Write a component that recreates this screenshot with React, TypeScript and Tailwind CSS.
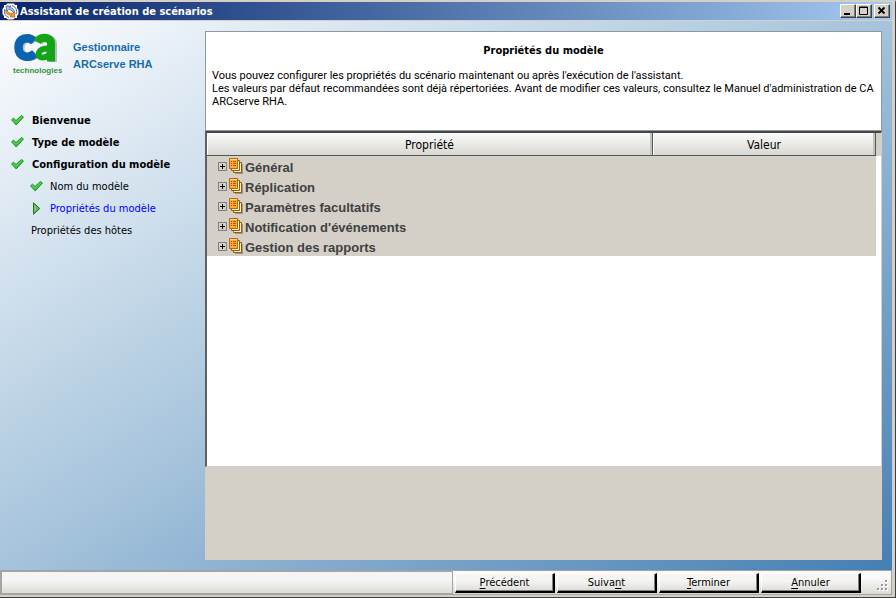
import React, { useState } from 'react';

type StepState = 'done' | 'current' | 'pending';

interface Step {
    label: string;
    state: StepState;
    sub?: boolean;
}

const steps: Step[] = [
    { label: 'Bienvenue', state: 'done' },
    { label: 'Type de modèle', state: 'done' },
    { label: 'Configuration du modèle', state: 'done' },
    { label: 'Nom du modèle', state: 'done', sub: true },
    { label: 'Propriétés du modèle', state: 'current', sub: true },
    { label: 'Propriétés des hôtes', state: 'pending', sub: true },
];

const groups = ['Général', 'Réplication', 'Paramètres facultatifs', "Notification d'événements", 'Gestion des rapports'];

const AppIcon = () => (
    <svg width="17" height="17" viewBox="0 0 17 17" className="shrink-0" aria-hidden="true">
        <path d="M5 .5h7l1 1.500h2V5l1.500 2v4L15 13v2h-2l-2 1.500H6L4 15H2v-2L.5 11V6L2 4V2h2z" fill="#fff" />
        <path d="M10 2.500a6 6 0 0 1 4 8.500M7 14.500A6 6 0 0 1 3 6" fill="none" stroke="#5a6a9c" strokeWidth="1" />
        <path d="M4 3h5l-1.500 1.500C11 5 12.500 7 12.500 9.500H11C10.500 8 9 6.500 6.500 6.500L5 8z" fill="#a9c2ee" stroke="#3a508c" strokeWidth=".7" />
        <path d="M13 14H8l1.500-1.500C6 12 3.500 10.500 3.500 7.500H5C6 9.500 8 10.500 10.500 10.500L12 9z" fill="#f2a02c" stroke="#a85c10" strokeWidth=".7" />
    </svg>
);

const CheckIcon = () => (
    <svg width="13" height="11" viewBox="0 0 13 11" className="shrink-0" aria-hidden="true">
        <path d="M.5 4.800 2.500 3.200 5 5.500 10.500.500l2 1.500-7.300 8z" fill="#2fc62f" stroke="#1d7a22" strokeWidth=".8" />
        <path d="M1.800 4.600 5 7.200 11 1.600" fill="none" stroke="#6be562" strokeWidth=".8" />
    </svg>
);

const ArrowIcon = () => (
    <svg width="13" height="13" viewBox="0 0 13 13" className="shrink-0" aria-hidden="true">
        <path d="M3.500.8v11.400L9.800 6.500z" fill="#5cb84e" stroke="#23731f" />
        <path d="M4.500 3.500v6L6 8V5z" fill="#8fd07c" />
    </svg>
);

const PagesIcon = () => (
    <svg width="14" height="16" viewBox="0 0 14 16" className="shrink-0" aria-hidden="true">
        <path d="M6 6h8v10H6z" fill="#9b9893" />
        <path d="M4.500 4.500h8v10h-8z" fill="#fff0cf" stroke="#9a5706" />
        <path d="M2.500 2.500h8v10h-8z" fill="#fff0cf" stroke="#9a5706" />
        <path d="M.5.5h8v10h-8z" fill="#fbaa3a" stroke="#b86708" />
        <path d="M1 1h7v1H1z" fill="#ffd48a" />
        <path d="M2 3.500h1M4 3.500h3M2 5.500h1M4 5.500h3M2 7.500h1M4 7.500h3" stroke="#a35c08" />
    </svg>
);

const CaLogo = () => (
    <svg width="50" height="44" viewBox="0 0 50 44" className="shrink-0" role="img" aria-label="ca technologies">
        <g transform="translate(1.5 .5)" fill="none" stroke="#8b9698" strokeOpacity=".6">
            <path d="M22 8C18 3.500 7 4 7 14.500s11 11 16 6" strokeWidth="8" />
            <path d="M25 9C28 3.500 39.500 3.500 39.500 10.500v18" strokeWidth="8" />
        </g>
        <path d="M22 8.500C17 3 6.500 4.500 6.500 14.500S17 26 23 20.500" fill="none" stroke="#0a62b0" strokeWidth="8.500" />
        <path d="M25 9C28 3 39 3 39 10.500v18" fill="none" stroke="#12a515" strokeWidth="8" />
        <path d="M38 15.500c-13-1-14 9-7.500 9 5 0 7.500-3 7.500-7" fill="none" stroke="#12a515" strokeWidth="6" />
        <text x="1" y="40" fontFamily="Liberation Sans, sans-serif" fontSize="8" fontWeight="700" fill="#35913c">technologies</text>
    </svg>
);

const GripIcon = () => (
    <svg width="12" height="12" viewBox="0 0 12 12" className="mr-0.5 mb-0.5 shrink-0 self-end" aria-hidden="true">
        <path d="M9 1h2v2H9zM5 5h2v2H5zM9 5h2v2H9zM1 9h2v2H1zM5 9h2v2H5zM9 9h2v2H9z" fill="#fff" />
        <path d="M8 0h2v2H8zM4 4h2v2H4zM8 4h2v2H8zM0 8h2v2H0zM4 8h2v2H4zM8 8h2v2H8z" fill="#9c9a9c" />
    </svg>
);

const WindowButton: React.FC<{ label: string; className?: string; children: React.ReactNode }> = ({ label, className = '', children }) => (
    <button
        aria-label={label}
        className={`flex h-3.5 w-4 items-center justify-center border border-t-white border-r-[#404040] border-b-[#404040] border-l-white bg-[#d4d0c8] shadow-[inset_-1px_-1px_0_#808080] ${className}`}
    >
        <svg width="10" height="10" viewBox="0 0 10 10" aria-hidden="true">
            {children}
        </svg>
    </button>
);

const StepItem: React.FC<{ step: Step }> = ({ step }) => (
    <li className={`flex h-[22px] items-center ${step.sub ? 'pl-[30px]' : 'pl-[11px] font-bold'}`}>
        {step.state === 'done' && <CheckIcon />}
        {step.state === 'current' && <ArrowIcon />}
        <span className={`${step.state === 'pending' ? 'ml-px' : step.sub ? 'ml-[7px]' : 'ml-2'} ${step.state === 'current' ? 'text-[#0000ff]' : ''}`}>
            {step.label}
        </span>
    </li>
);

const WizardButton: React.FC<{ before?: string; accessKey: string; after: string }> = ({ before = '', accessKey, after }) => (
    <button
        accessKey={accessKey}
        className="h-5 w-[100px] border-t border-r-2 border-b-2 border-l border-t-white border-r-black border-b-black border-l-white bg-linear-to-b from-[#f6f5f4] from-40% to-[#dcdcd6] text-center shadow-[inset_-1px_-1px_0_#808080]"
    >
        {before}
        <span className="underline underline-offset-2">{accessKey}</span>
        {after}
    </button>
);

const App: React.FC = () => {
    const [expanded, setExpanded] = useState<string[]>([]);

    const toggleGroup = (name: string) => {
        setExpanded(prev => (prev.includes(name) ? prev.filter(g => g !== name) : [...prev, name]));
    };

    const headerCell =
        'h-[23px] border-r border-b border-r-[#4c5a5c] border-b-[#4c5a5c] bg-linear-to-b from-[#fafafa] to-[#d9d8d2] p-0 pt-0.5 text-center text-xs font-normal shadow-[inset_-2px_0_0_#c4c3bd,inset_1px_0_0_#fff]';

    return (
        <div className="flex min-h-screen flex-col border-t-2 border-r border-b border-t-[#d4d0c8] border-r-[#404040] border-b-[#404040] bg-[#d4d0c8] pr-[3px] pb-0.5 font-['DejaVu_Sans_Condensed','DejaVu_Sans',sans-serif] text-[11px] leading-[13px] text-black">
            <header className="flex h-[18px] items-center bg-linear-to-r from-[#0a246a] to-[#a6caf0] pr-0.5 pl-0.5 text-white">
                <AppIcon />
                <h1 className="ml-px grow font-bold">Assistant de création de scénarios</h1>
                <WindowButton label="Réduire">
                    <path d="M1 7h6v2H1z" />
                </WindowButton>
                <WindowButton label="Agrandir">
                    <path d="M.5 1h8v7.500h-8zM.5 1.500h8" fill="none" stroke="#000" />
                </WindowButton>
                <WindowButton label="Fermer" className="ml-0.5">
                    <path d="M1.500 1.500l6 6M7.500 1.500l-6 6" stroke="#000" strokeWidth="1.800" />
                </WindowButton>
            </header>

            <div className="mt-px flex grow bg-linear-to-br from-[#fcfdff] via-[#a5c3db] to-[#447fb3]">
                <aside className="w-[205px] shrink-0">
                    <div className="flex pt-3 pl-3">
                        <CaLogo />
                        <p className="ml-[11px] pt-1.5 font-['Liberation_Sans',sans-serif] leading-[17px] font-bold text-[#176cb0]">
                            Gestionnaire
                            <br />
                            ARCserve RHA
                        </p>
                    </div>
                    <ol className="mt-8">
                        {steps.map(step => (
                            <StepItem key={step.label} step={step} />
                        ))}
                    </ol>
                </aside>

                <main className="mt-2.5 mr-2.5 mb-2.5 flex min-w-0 grow flex-col bg-[#d4d0c8]">
                    <section className="h-[100px] border border-[#8b9a9c] bg-white px-1.5">
                        <h2 className="mt-3 text-center font-bold">Propriétés du modèle</h2>
                        <p className="mt-3 font-['Roboto','Liberation_Sans',sans-serif]">
                            Vous pouvez configurer les propriétés du scénario maintenant ou après l'exécution de l'assistant.
                            <br />
                            Les valeurs par défaut recommandées sont déjà répertoriées. Avant de modifier ces valeurs, consultez le Manuel d'administration de CA ARCserve RHA.
                        </p>
                    </section>

                    <section className="mb-[93px] grow border-t-2 border-r border-b border-l-2 border-t-[#454545] border-r-[#d4d0c8] border-b-[#d4d0c8] border-l-[#606060] bg-white">
                        <table className="w-full table-fixed border-separate border-spacing-0">
                            <colgroup>
                                <col />
                                <col className="w-[223px]" />
                                <col className="w-[5px]" />
                            </colgroup>
                            <thead>
                                <tr>
                                    <th className={headerCell}>Propriété</th>
                                    <th className={headerCell}>Valeur</th>
                                    <td className="bg-[#d4d0c8]" />
                                </tr>
                            </thead>
                            <tbody>
                                {groups.map(name => (
                                    <tr key={name}>
                                        <td colSpan={2} className="h-5 bg-[#d4d0c8] p-0">
                                            <div className="flex items-center pl-[11px]">
                                                <button
                                                    aria-label={`Développer ${name}`}
                                                    aria-expanded={expanded.includes(name)}
                                                    onClick={() => toggleGroup(name)}
                                                    className="mr-0.5 flex size-[9px] items-center justify-center border border-[#808080]"
                                                >
                                                    <svg width="5" height="5" viewBox="0 0 5 5" className="shrink-0" aria-hidden="true">
                                                        <path d={expanded.includes(name) ? 'M0 2h5v1H0z' : 'M0 2h5v1H0zM2 0h1v5H2z'} />
                                                    </svg>
                                                </button>
                                                <PagesIcon />
                                                <span className="ml-0.5 pt-1 font-['Liberation_Sans',sans-serif] text-[13px] leading-4 font-bold text-[#404040]">{name}</span>
                                            </div>
                                        </td>
                                        <td className="p-0" />
                                    </tr>
                                ))}
                            </tbody>
                        </table>
                    </section>
                </main>
            </div>

            <footer className="flex h-[25px] items-center gap-0.5 border border-[#a5a3a3] bg-linear-to-b from-[#faf9f9] from-30% to-[#dcdcd6]">
                <div className="h-full grow border border-[#a5a3a3] bg-linear-to-b from-[#f6f5f5] from-40% to-[#dcdcd4]" role="status" />
                <WizardButton accessKey="P" after="récédent" />
                <WizardButton before="Suiva" accessKey="n" after="t" />
                <WizardButton accessKey="T" after="erminer" />
                <WizardButton accessKey="A" after="nnuler" />
                <div className="ml-3.5 flex h-full">
                    <GripIcon />
                </div>
            </footer>
        </div>
    );
};

export default App;
